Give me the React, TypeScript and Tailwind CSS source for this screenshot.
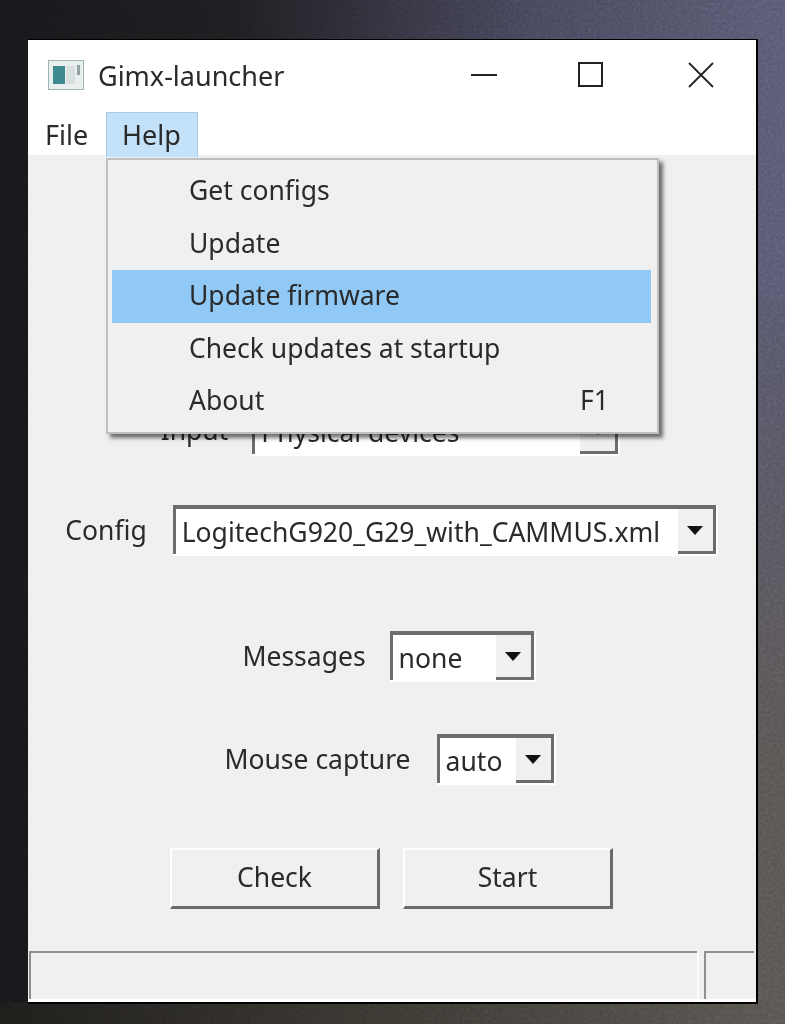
import type { ReactNode } from "react"

function Combo({ text, width, arrow = "w-[38px]" }: { text: string; width: string; arrow?: string }) {
  return (
    <div className={`flex h-[51px] shrink-0 border-r-2 border-b-2 border-white ${width}`}>
      <div className="flex flex-1 border-t-[4px] border-l-[3px] border-[#6d6d6d]">
        <div className="flex-1 overflow-hidden bg-white pl-[6px] leading-[46px] whitespace-nowrap">{text}</div>
        <div className={`flex items-center justify-center border-r-[3px] border-b-[3px] border-[#6d6d6d] bg-[#f0f0f0] ${arrow}`}>
          <svg width="16" height="9" viewBox="0 0 16 9"><path d="M0 0h16L8 9z" fill="#111" /></svg>
        </div>
      </div>
    </div>
  )
}

function Btn({ children }: { children: ReactNode }) {
  return (
    <div className="flex h-[61px] w-[210px] items-center justify-center border-t-2 border-r-[3px] border-b-[3px] border-l-2 border-t-white border-r-[#6a6a6a] border-b-[#6a6a6a] border-l-white bg-[#f0f0f0]">
      {children}
    </div>
  )
}

function MenuItem({ label, hint, active }: { label: string; hint?: string; active?: boolean }) {
  return (
    <div className={`flex h-[52.5px] items-center justify-between pr-[42px] pl-[77px] ${active ? "bg-[#90c8f6]" : ""}`}>
      <span>{label}</span>
      {hint && <span>{hint}</span>}
    </div>
  )
}

export default function App() {
  return (
    <div className="relative h-[1024px] w-[785px] overflow-hidden bg-[linear-gradient(90deg,#17171a_0%,#1d1d20_30%,#45455a_68%,#585870_100%)] pt-[39px] pl-[28px] font-['Noto_Sans',sans-serif] text-[26.5px] text-[#2a2a2a]">
      <div className="absolute top-[300px] right-0 bottom-0 w-[28px] bg-[linear-gradient(180deg,#55556a,#57534f_70%)]" />
      <div className="absolute inset-x-0 bottom-0 h-[21px] bg-[linear-gradient(90deg,#1d1c1a,#37342f_45%,#57534f)]" />
      <svg className="absolute inset-0 opacity-40 mix-blend-overlay" width="785" height="1024">
        <filter id="grain"><feTurbulence type="fractalNoise" baseFrequency="0.35" numOctaves="2" /><feColorMatrix type="saturate" values="0" /></filter>
        <rect width="785" height="1024" filter="url(#grain)" />
      </svg>
      <div className="relative flex h-[965px] w-[730px] flex-col border-t-[1px] border-r-[2px] border-b-[2px] border-black bg-white blur-[0.5px]">
        <div className="flex h-[60px] shrink-0 items-center pt-[9px]">
          <svg className="ml-[20px]" width="36" height="30" viewBox="0 0 36 30">
            <rect x="0.5" y="0.5" width="35" height="29" fill="#e9efef" stroke="#9db5b5" />
            <rect x="5" y="6" width="12" height="18" fill="#3f8a90" />
            <rect x="18" y="6" width="9" height="18" fill="#d7dfdf" />
            <rect x="29" y="5" width="3" height="10" fill="#8fa3a3" />
          </svg>
          <span className="ml-[14px] flex-1 pt-[3px] text-[27px]">Gimx-launcher</span>
          <svg className="mr-[81px]" width="26" height="2" viewBox="0 0 26 2"><rect width="26" height="2" fill="#222" /></svg>
          <svg className="mr-[85px]" width="25" height="25" viewBox="0 0 25 25"><rect x="1" y="1" width="23" height="23" fill="none" stroke="#222" strokeWidth="2" /></svg>
          <svg className="mr-[42px]" width="26" height="26" viewBox="0 0 26 26"><path d="M1 1l24 24M25 1L1 25" stroke="#222" strokeWidth="1.8" fill="none" /></svg>
        </div>
        <div className="flex h-[55px] shrink-0 items-end text-[27px]">
          <span className="mb-[1px] ml-[17px] w-[61px] leading-[38px]">File</span>
          <span className="relative z-20 -mb-[2px] h-[45px] w-[92px] border-[1.5px] border-b-0 border-[#a3cde8] bg-[#c3e2f9] pl-[15px] leading-[44px]">Help</span>
        </div>
        <div className="relative flex flex-1 flex-col bg-[#f0f0f0]">
          <div className="mt-[250px] flex items-center justify-center gap-[24px] pr-[3px]">
            <span>Input</span>
            <Combo text="Physical devices" width="w-[368px]" />
          </div>
          <div className="mt-[49px] flex items-center justify-center gap-[26px] pr-[1px]">
            <span>Config</span>
            <Combo text="LogitechG920_G29_with_CAMMUS.xml" width="w-[545px]" />
          </div>
          <div className="mt-[75px] flex items-center justify-center gap-[24px] pr-[6px]">
            <span>Messages</span>
            <Combo text="none" width="w-[146px]" />
          </div>
          <div className="mt-[52px] flex items-center justify-center gap-[26px] pr-[4px]">
            <span>Mouse capture</span>
            <Combo text="auto" width="w-[119px]" />
          </div>
          <div className="mt-[63px] flex justify-center gap-[23px] pr-[1px]">
            <Btn>Check</Btn>
            <Btn>Start</Btn>
          </div>
          <div className="mt-auto mb-[3px] flex gap-[7px] pr-[2px] pl-[1px]">
            <div className="h-[48px] flex-1 border-t-2 border-l-2 border-[#8f8f8f] [box-shadow:2px_2px_0_#fff]" />
            <div className="h-[48px] w-[50px] border-t-2 border-l-2 border-[#8f8f8f]" />
          </div>
          <div className="absolute inset-x-0 bottom-0 h-[3px] bg-white" />
        </div>
        <div className="absolute top-[118px] left-[78px] z-10 h-[276px] w-[553px] border-2 border-[#bfbfbf] bg-[#f0f0f0] pt-[5px] pr-[6px] pl-[4px] [box-shadow:4px_4px_4px_rgba(0,0,0,0.55)]">
          <MenuItem label="Get configs" />
          <MenuItem label="Update" />
          <MenuItem label="Update firmware" active />
          <MenuItem label="Check updates at startup" />
          <MenuItem label="About" hint="F1" />
        </div>
      </div>
    </div>
  )
}
